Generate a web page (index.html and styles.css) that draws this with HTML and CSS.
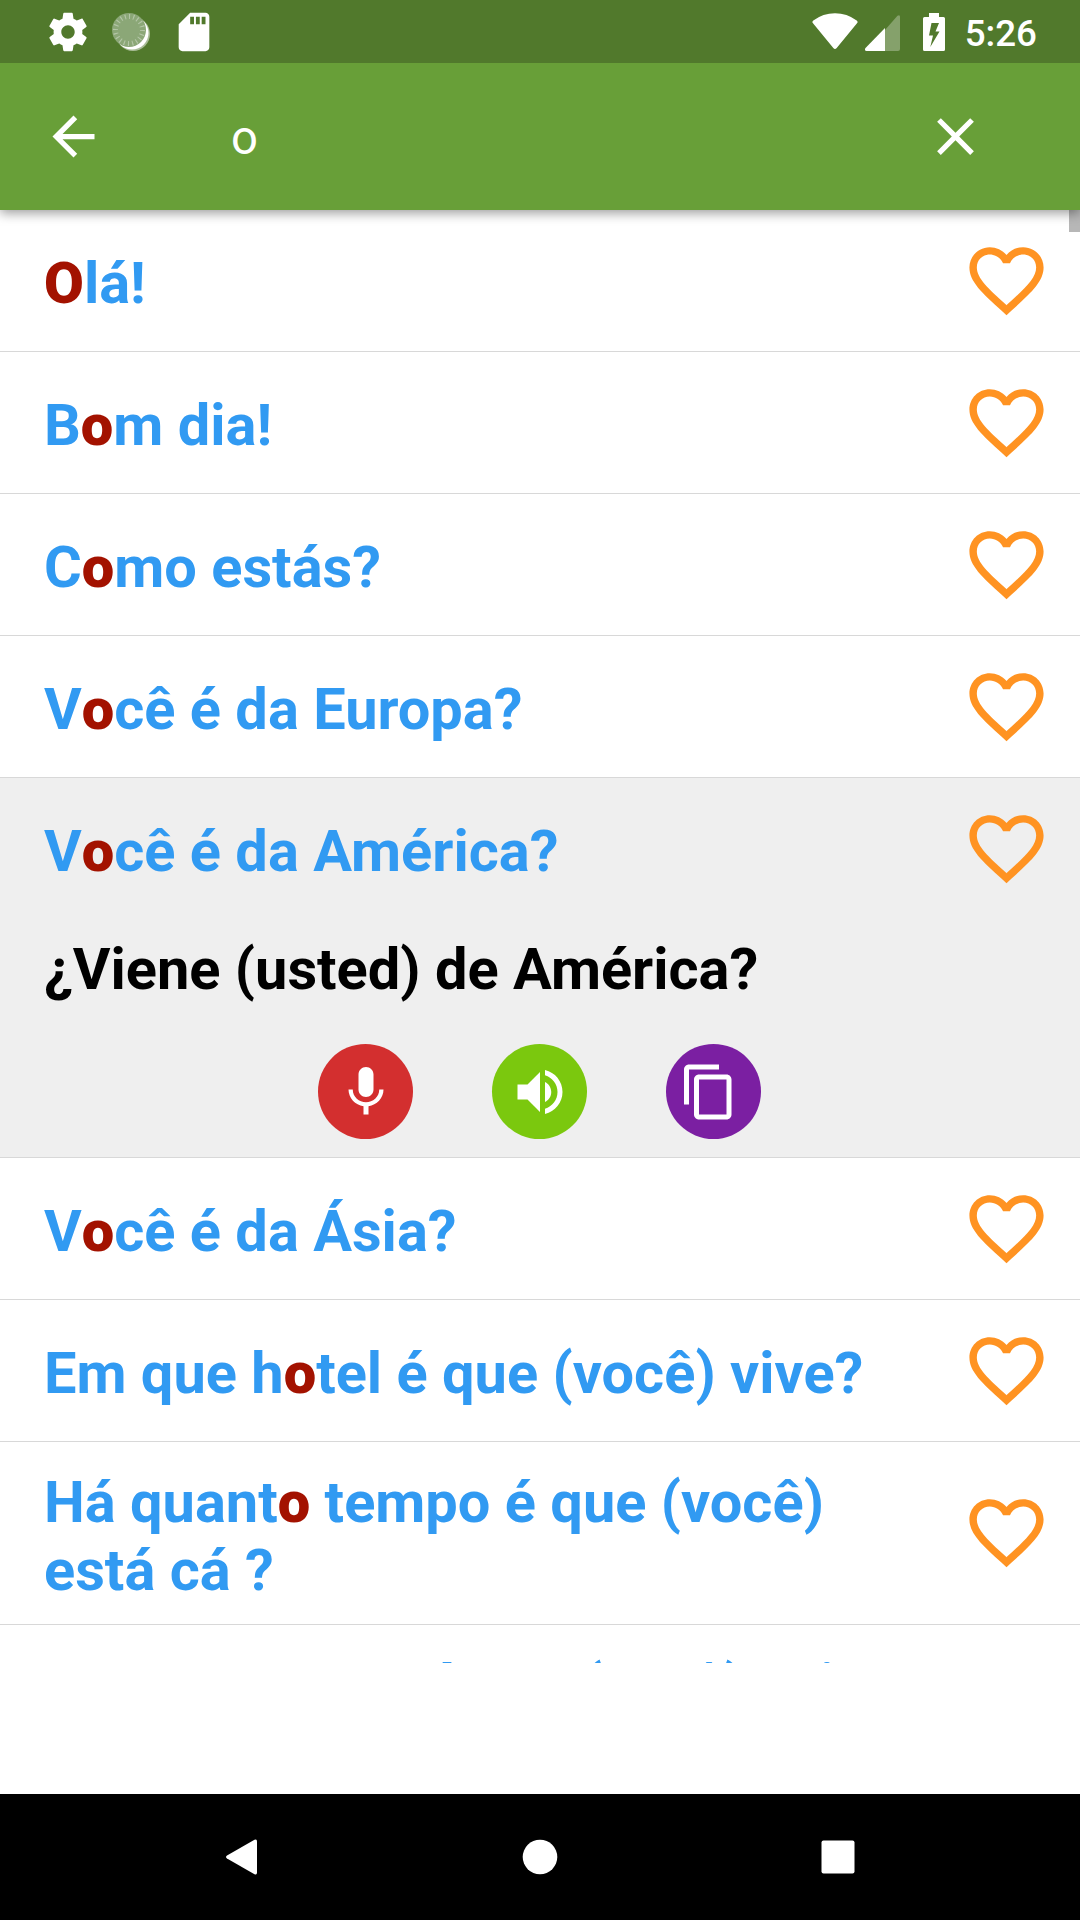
FILE: index.html
```html
<!DOCTYPE html>
<html lang="pt">
<head>
<meta charset="utf-8">
<title>Search</title>
<link rel="stylesheet" href="styles.css">
</head>
<body>
<svg class="defs">
	<symbol id="heart" viewBox="0 0 24 24"><path d="M16.5 3c-1.74 0-3.41.81-4.5 2.09C10.91 3.81 9.24 3 7.5 3 4.42 3 2 5.42 2 8.5c0 3.78 3.4 6.86 8.55 11.54L12 21.35l1.45-1.32C18.6 15.36 22 12.28 22 8.5 22 5.42 19.58 3 16.5 3zm-4.4 15.55l-.1.1-.1-.1C7.14 14.24 4 11.39 4 8.5 4 6.5 5.5 5 7.5 5c1.54 0 3.04.99 3.57 2.36h1.87C13.46 5.99 14.96 5 16.5 5c2 0 3.5 1.5 3.5 3.5 0 2.89-3.14 5.74-7.9 10.05z"/></symbol>
</svg>

<div class="status">
	<svg class="s-icon" viewBox="0 0 24 24"><path d="M19.43 12.98c.04-.32.07-.64.07-.98s-.03-.66-.07-.98l2.11-1.65c.19-.15.24-.42.12-.64l-2-3.46c-.12-.22-.39-.3-.61-.22l-2.49 1c-.52-.4-1.08-.73-1.69-.98l-.38-2.65C14.46 2.18 14.25 2 14 2h-4c-.25 0-.46.18-.49.42l-.38 2.65c-.61.25-1.17.59-1.69.98l-2.49-1c-.23-.09-.49 0-.61.22l-2 3.46c-.13.22-.07.49.12.64l2.11 1.65c-.04.32-.07.65-.07.98s.03.66.07.98l-2.11 1.65c-.19.15-.24.42-.12.64l2 3.46c.12.22.39.3.61.22l2.49-1c.52.4 1.08.73 1.69.98l.38 2.65c.03.24.24.42.49.42h4c.25 0 .46-.18.49-.42l.38-2.65c.61-.25 1.17-.59 1.69-.98l2.49 1c.23.09.49 0 .61-.22l2-3.46c.12-.22.07-.49-.12-.64l-2.11-1.65zM12 15.5c-1.93 0-3.5-1.57-3.5-3.5s1.57-3.5 3.5-3.5 3.5 1.57 3.5 3.5-1.57 3.5-3.5 3.5z"/></svg>
	<svg class="s-icon" viewBox="0 0 46 46">
		<circle cx="25" cy="25" r="17" opacity=".5"/>
		<circle cx="24" cy="24" r="16.5"/>
		<circle cx="21" cy="21" r="17" fill="#8ba777"/>
		<circle class="ticks" cx="21" cy="21" r="13.5" pathLength="100"/>
	</svg>
	<svg class="s-icon" viewBox="0 0 24 24"><path d="M18 2h-8L4.02 8 4 20c0 1.1.9 2 2 2h12c1.1 0 2-.9 2-2V4c0-1.1-.9-2-2-2zm-6 6h-2V4h2v4zm3 0h-2V4h2v4zm3 0h-2V4h2v4z"/></svg>
	<svg class="wifi" viewBox="0 0 46 37"><path d="M1.3 7.5Q-.3 8.800 1 10.300L21.300 35Q23 37.200 24.700 35L45 10.300Q46.300 8.800 44.700 7.500 35 .2 23 .2T1.300 7.500z"/></svg>
	<svg class="signal" viewBox="0 0 35 36"><path d="M20 15L32.500.8Q35-1 35 2V34Q35 36 33 36H20z"/><path d="M20 13V36H1.500Q-1 35.500.500 33z"/></svg>
	<svg class="battery" viewBox="0 0 22 38"><path fill-rule="evenodd" d="M6 0H16V4H20.500Q22 4 22 5.500V36.500Q22 38 20.500 38H1.500Q0 38 0 36.500V5.500Q0 4 1.500 4H6zM8.500 10L6 22.500H10L7.300 34 16.500 18.500H12.500L16 10z"/></svg>
	<span class="clock">5:26</span>
</div>

<div class="toolbar">
	<svg class="t-icon" viewBox="0 0 24 24"><path d="M20 11H7.830l5.590-5.590L12 4l-8 8 8 8 1.410-1.410L7.830 13H20v-2z"/></svg>
	<span class="query">o</span>
	<svg class="t-icon" viewBox="0 0 24 24"><path d="M19 6.410L17.590 5 12 10.590 6.410 5 5 6.410 10.590 12 5 17.590 6.410 19 12 13.410 17.590 19 19 17.590 13.410 12z"/></svg>
</div>

<div class="list">
	<div class="item"><div class="row"><p><b>O</b>lá!</p><svg class="heart"><use href="#heart"/></svg></div></div>
	<div class="item"><div class="row"><p>B<b>o</b>m dia!</p><svg class="heart"><use href="#heart"/></svg></div></div>
	<div class="item"><div class="row"><p>C<b>o</b>mo estás?</p><svg class="heart"><use href="#heart"/></svg></div></div>
	<div class="item"><div class="row"><p>V<b>o</b>cê é da Europa?</p><svg class="heart"><use href="#heart"/></svg></div></div>
	<div class="item open">
		<div class="row"><p>V<b>o</b>cê é da América?</p><svg class="heart"><use href="#heart"/></svg></div>
		<p class="answer">¿Viene (usted) de América?</p>
		<div class="actions">
			<a class="round mic"><svg viewBox="0 0 24 24"><path d="M12 14c1.660 0 3-1.340 3-3V5c0-1.660-1.340-3-3-3S9 3.340 9 5v6c0 1.660 1.340 3 3 3zM17.300 11c0 3-2.540 5.100-5.300 5.100S6.700 14 6.700 11H5c0 3.410 2.720 6.230 6 6.720V21h2v-3.280c3.280-.480 6-3.300 6-6.720h-1.700z"/></svg></a>
			<a class="round sound"><svg viewBox="0 0 24 24"><path d="M3 9v6h4l5 5V4L7 9H3zm13.500 3c0-1.770-1.020-3.290-2.500-4.030v8.050c1.480-.730 2.500-2.250 2.500-4.020zM14 3.230v2.060c2.890.860 5 3.540 5 6.710s-2.110 5.850-5 6.710v2.060c4.010-.910 7-4.490 7-8.770s-2.990-7.860-7-8.770z"/></svg></a>
			<a class="round copy"><svg viewBox="0 0 24 24"><path d="M16 1H4C2.900 1 2 1.900 2 3v14h2V3h12V1zm3 4H8c-1.100 0-2 .9-2 2v14c0 1.100.9 2 2 2h11c1.100 0 2-.9 2-2V7c0-1.100-.9-2-2-2zm0 16H8V7h11v14z"/></svg></a>
		</div>
	</div>
	<div class="item"><div class="row"><p>V<b>o</b>cê é da Ásia?</p><svg class="heart"><use href="#heart"/></svg></div></div>
	<div class="item"><div class="row"><p>Em que h<b>o</b>tel é que (você) vive?</p><svg class="heart"><use href="#heart"/></svg></div></div>
	<div class="item"><div class="row long"><p>Há quant<b>o</b> tempo é que (você) está cá ?</p><svg class="heart"><use href="#heart"/></svg></div></div>
	<div class="item"><div class="row long"><p>Quant<b>o</b> tempo é que (você) vai ficar?</p><svg class="heart"><use href="#heart"/></svg></div></div>
	<i class="scroll"></i>
</div>

<div class="banner"></div>

<div class="nav">
	<svg viewBox="0 0 36 36"><path d="M31.500.8Q34-.5 34 2.500V33.500Q34 36.500 31.500 35.200L4 19.600Q2 18 4 16.400z"/></svg>
	<svg viewBox="0 0 36 36"><circle cx="18" cy="18" r="17.300"/></svg>
	<svg viewBox="0 0 36 36"><rect x="1.500" y="1.500" width="33" height="33" rx="2"/></svg>
</div>
</body>
</html>
```

FILE: styles.css
```css
body,p{margin: 0;padding: 0;}
body{width: 1080px;height: 1920px;display: flex;flex-direction: column;overflow: hidden;background-color: #fff;font-family: Roboto,sans-serif;}
svg{display: block;flex: none;fill: #fff;}
.defs{display: none;}

/* status bar */
.status{flex: none;height: 63px;box-sizing: border-box;padding: 0 43px 0 45px;display: flex;align-items: center;background-color: #51792c;color: #fff;position: relative;z-index: 3;}
.s-icon{width: 46px;height: 46px;margin-right: 17px;}
.ticks{fill: none;stroke: #b4c6a7;stroke-width: 5;stroke-dasharray: 1.3 3.7;}
.wifi{width: 46px;height: 37px;margin-left: auto;}
.signal{width: 35px;height: 36px;margin: 2px 0 0 7px;}
.signal path:first-child{opacity: .3;}
.battery{width: 22px;height: 38px;margin: 0 20px 0 23px;}
.clock{font-size: 36.75px;font-weight: 500;line-height: 43px;padding-top: 3px;}

/* search bar */
.toolbar{flex: none;height: 147px;box-sizing: border-box;padding: 0 93px 0 42px;display: flex;align-items: center;background-color: #689f38;position: relative;z-index: 2;box-shadow: 0 3px 11px rgba(0,0,0,.4);}
.t-icon{width: 63px;height: 63px;}
.query{flex: 1;margin-left: 126px;padding-top: 3px;color: #fff;font-size: 47.25px;line-height: 56px;}

/* phrases */
.list{flex: none;height: 1453px;overflow: hidden;position: relative;}
.item{border-bottom: 1px solid #d8d8d8;}
.open{background-color: #efefef;}
.row{display: flex;align-items: center;min-height: 141px;padding: 0 29px 0 44px;}
.row p{flex: 1;padding: 5px 50px 0 0;color: #319af2;}
.row.long p{padding: 26px 50px 20px 0;}
.row p,.answer{font-size: 57.75px;font-weight: bold;line-height: 68px;}
.row b{color: #a31200;}
.heart{width: 89px;height: 89px;fill: #ff9322;}
.long .heart{margin-bottom: 2px;}
.answer{padding: 16px 44px 0;color: #000;}
.actions{display: flex;justify-content: center;gap: 79px;padding: 41px 1px 18px 0;}
.round{width: 95px;height: 95px;border-radius: 50%;display: flex;align-items: center;justify-content: center;}
.round svg{width: 60px;height: 60px;}
.mic{background-color: #d32f2f;}
.sound{background-color: #7bc80e;}
.copy{background-color: #7b1fa2;}
.copy svg{margin-right: 9px;}
.scroll{position: absolute;top: 0;right: 0;width: 11px;height: 22px;background-color: #b7b7b7;}

.banner{flex: 1;}

/* navigation buttons */
.nav{flex: none;height: 126px;box-sizing: border-box;padding: 0 224px 0 223px;display: flex;align-items: center;justify-content: space-between;background-color: #000;}
.nav svg{width: 36px;height: 36px;}
```
